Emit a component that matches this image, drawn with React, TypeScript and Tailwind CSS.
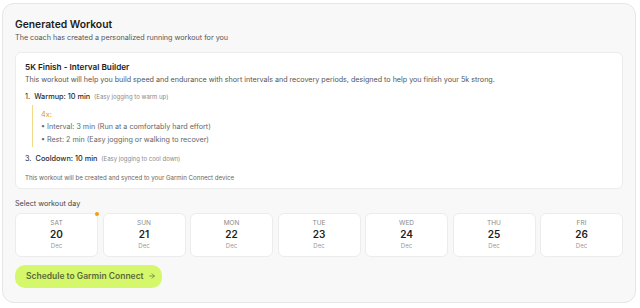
import React from 'react';
import { ArrowRight } from 'lucide-react';

const days = [
    { dow: 'SAT', day: '20' },
    { dow: 'SUN', day: '21' },
    { dow: 'MON', day: '22' },
    { dow: 'TUE', day: '23' },
    { dow: 'WED', day: '24' },
    { dow: 'THU', day: '25' },
    { dow: 'FRI', day: '26' },
];

const DayCard: React.FC<{ dow: string; day: string; today?: boolean }> = ({ dow, day, today }) => (
    <div className="relative flex-1 h-[44px] rounded-[6px] border border-[#ececec] bg-white flex flex-col items-center justify-center">
        {today && <span className="absolute -top-[2px] -right-[2px] w-[4px] h-[4px] rounded-full bg-[#f59e0b]" />}
        <span className="text-[6.5px] leading-[9px] text-[#8a8a8a]">{dow}</span>
        <span className="text-[10px] leading-[13px] font-semibold text-[#1f1f1f]">{day}</span>
        <span className="text-[6px] leading-[9px] text-[#9a9a9a]">Dec</span>
    </div>
);

export default function App() {
    return (
        <div className="w-[640px] h-[308px] bg-white pt-[3px] pl-[2px] font-['Inter',sans-serif]">
            <div className="w-[634px] h-[300px] rounded-[12px] border border-[#e6e6e6] bg-[#f8f8f8] px-[12px] pt-[13px]">
                <h1 className="text-[10.3px] leading-[14px] font-semibold text-[#1c1c1c]">Generated Workout</h1>
                <p className="mt-[2px] text-[7.2px] leading-[10px] text-[#555]">The coach has created a personalized running workout for you</p>

                <div className="mt-[9px] rounded-[6px] border border-[#ececec] bg-white px-[9px] pt-[8px] pb-[5px]">
                    <h2 className="text-[8.2px] leading-[12px] font-semibold text-[#1c1c1c]">5K Finish - Interval Builder</h2>
                    <p className="mt-[1.5px] text-[7.15px] leading-[10px] text-[#555]">
                        This workout will help you build speed and endurance with short intervals and recovery periods, designed to help you finish your 5k strong.
                    </p>

                    <div className="mt-[7.5px] text-[7.3px] leading-[10px] text-[#2a2a2a]">
                        1.&nbsp; <span className="font-medium">Warmup: 10 min</span>
                        <span className="ml-[4px] text-[6px] text-[#8a8a8a]">(Easy jogging to warm up)</span>
                    </div>

                    <div className="mt-[3px] ml-[7px] border-l border-[#f3d98a] pl-[8px] pt-[5px] pb-[1px]">
                        <div className="text-[7.3px] leading-[10px] text-[#d99a2b]">4x:</div>
                        <div className="text-[7.2px] leading-[13px] text-[#666]">• Interval: 3 min (Run at a comfortably hard effort)</div>
                        <div className="text-[7.2px] leading-[13px] text-[#666]">• Rest: 2 min (Easy jogging or walking to recover)</div>
                    </div>

                    <div className="mt-[7px] text-[7.3px] leading-[10px] text-[#2a2a2a]">
                        3.&nbsp; <span className="font-medium">Cooldown: 10 min</span>
                        <span className="ml-[4px] text-[6px] text-[#8a8a8a]">(Easy jogging to cool down)</span>
                    </div>

                    <p className="mt-[8.5px] text-[6.15px] leading-[10px] text-[#666]">This workout will be created and synced to your Garmin Connect device</p>
                </div>

                <p className="mt-[10px] text-[7.2px] leading-[10px] text-[#444]">Select workout day</p>
                <div className="mt-[4px] flex gap-[4.5px]">
                    {days.map((d, i) => (
                        <DayCard key={d.dow} dow={d.dow} day={d.day} today={i === 0} />
                    ))}
                </div>

                <button className="mt-[8px] h-[23px] w-[147px] rounded-[10px] bg-[#d4f76b] flex items-center pl-[11px] gap-[4px] text-[8.5px] font-semibold text-[#5c6b38]">
                    Schedule to Garmin Connect
                    <ArrowRight size={8} strokeWidth={2} />
                </button>
            </div>
        </div>
    );
}
